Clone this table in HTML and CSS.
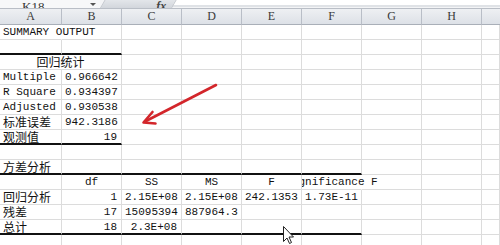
FILE: index.html
```html
<!DOCTYPE html>
<html>
<head>
<meta charset="utf-8">
<link rel="stylesheet" href="styles.css">
</head>
<body>
<div class="sheet">
  <div class="fbar">
    <div class="namebox"><span class="nametext">K18</span><span class="dd"></span></div>
    <div class="fbtns"><span class="fx">fx</span></div>
    <div class="finput"></div>
  </div>
  <div class="grid">
    <div class="h">A</div><div class="h">B</div><div class="h">C</div><div class="h">D</div><div class="h">E</div><div class="h">F</div><div class="h">G</div><div class="h">H</div><div class="h last"></div>

    <div class="c spill">SUMMARY OUTPUT</div><div class="c"></div><div class="c"></div><div class="c"></div><div class="c"></div><div class="c"></div><div class="c"></div><div class="c"></div><div class="c"></div>

    <div class="c tb"></div><div class="c tb"></div><div class="c"></div><div class="c"></div><div class="c"></div><div class="c"></div><div class="c"></div><div class="c"></div><div class="c"></div>

    <div class="c ctr span2"><span class="cjk">回归统计</span></div><div class="c"></div><div class="c"></div><div class="c"></div><div class="c"></div><div class="c"></div><div class="c"></div><div class="c"></div>

    <div class="c">Multiple</div><div class="c r">0.966642</div><div class="c"></div><div class="c"></div><div class="c"></div><div class="c"></div><div class="c"></div><div class="c"></div><div class="c"></div>

    <div class="c">R Square</div><div class="c r">0.934397</div><div class="c"></div><div class="c"></div><div class="c"></div><div class="c"></div><div class="c"></div><div class="c"></div><div class="c"></div>

    <div class="c">Adjusted</div><div class="c r">0.930538</div><div class="c"></div><div class="c"></div><div class="c"></div><div class="c"></div><div class="c"></div><div class="c"></div><div class="c"></div>

    <div class="c"><span class="cjk">标准误差</span></div><div class="c r">942.3186</div><div class="c"></div><div class="c"></div><div class="c"></div><div class="c"></div><div class="c"></div><div class="c"></div><div class="c"></div>

    <div class="c tb"><span class="cjk">观测值</span></div><div class="c r tb">19</div><div class="c"></div><div class="c"></div><div class="c"></div><div class="c"></div><div class="c"></div><div class="c"></div><div class="c"></div>

    <div class="c"></div><div class="c"></div><div class="c"></div><div class="c"></div><div class="c"></div><div class="c"></div><div class="c"></div><div class="c"></div><div class="c"></div>

    <div class="c tb"><span class="cjk">方差分析</span></div><div class="c tb"></div><div class="c tb"></div><div class="c tb"></div><div class="c tb"></div><div class="c tb"></div><div class="c"></div><div class="c"></div><div class="c"></div>

    <div class="c"></div><div class="c ctr">df</div><div class="c ctr">SS</div><div class="c ctr">MS</div><div class="c ctr">F</div><div class="c sig">Significance F</div><div class="c"></div><div class="c"></div><div class="c"></div>

    <div class="c"><span class="cjk">回归分析</span></div><div class="c r">1</div><div class="c r">2.15E+08</div><div class="c r">2.15E+08</div><div class="c r">242.1353</div><div class="c r">1.73E-11</div><div class="c"></div><div class="c"></div><div class="c"></div>

    <div class="c"><span class="cjk">残差</span></div><div class="c r">17</div><div class="c r">15095394</div><div class="c r">887964.3</div><div class="c"></div><div class="c"></div><div class="c"></div><div class="c"></div><div class="c"></div>

    <div class="c tb"><span class="cjk">总计</span></div><div class="c r tb">18</div><div class="c r tb">2.3E+08</div><div class="c tb"></div><div class="c tb"></div><div class="c tb"></div><div class="c"></div><div class="c"></div><div class="c"></div>

    <div class="c"></div><div class="c"></div><div class="c"></div><div class="c"></div><div class="c"></div><div class="c"></div><div class="c"></div><div class="c"></div><div class="c"></div>
  </div>

  <svg class="overlay" width="500" height="245" viewBox="0 0 500 245">
    <g class="arrow">
      <path d="M216 85 L145 121.5"/>
      <path d="M152.5 112 L143.5 122.5 L155.5 123.5"/>
    </g>
    <path class="cursor" d="M283.5 226.5 L283.5 241.5 L287 238 L289.5 243.5 L291.5 242.5 L289 237 L293.5 237 Z"/>
  </svg>
</div>
</body>
</html>
```

FILE: styles.css
```css
html, body {
  margin: 0;
  padding: 0;
  background: #ffffff;
}

.sheet {
  position: relative;
  width: 500px;
  height: 245px;
  overflow: hidden;
  background: #ffffff;
}

.fbar {
  display: flex;
  height: 9px;
  overflow: hidden;
  background: #f3f4f6;
  border-bottom: 1px solid #b9bec6;
  box-sizing: border-box;
}

.namebox {
  width: 100px;
  display: flex;
  align-items: flex-end;
  background: #f7f8f9;
  position: relative;
}

.nametext {
  display: block;
  margin-left: 22px;
  margin-bottom: -5px;
  font: 13px "Liberation Serif", serif;
  color: #333;
  line-height: 13px;
}

.dd {
  position: absolute;
  right: 4px;
  bottom: 2px;
  width: 0;
  height: 0;
  border-left: 3px solid transparent;
  border-right: 3px solid transparent;
  border-top: 3px solid #555;
}

.fbtns {
  width: 70px;
  background: linear-gradient(#e3e6ea, #d2d6dc);
  border-left: 1px solid #c2c6cc;
  border-right: 1px solid #c2c6cc;
  display: flex;
  justify-content: flex-end;
  align-items: flex-end;
  transform: skewX(-30deg);
  transform-origin: bottom;
}

.fx {
  display: block;
  transform: skewX(30deg);
  margin-right: 6px;
  margin-bottom: -4px;
  font: italic bold 12px "Liberation Serif", serif;
  color: #444;
  line-height: 12px;
}

.finput {
  flex: 1;
  background: #ffffff;
  border-bottom: 2px solid #dfe2e6;
  box-sizing: border-box;
  margin-bottom: 1px;
}

.grid {
  display: grid;
  grid-template-columns: 62px repeat(7, 60px) 1fr;
  grid-template-rows: 16px repeat(15, 15px);
}

.h {
  box-sizing: border-box;
  background: linear-gradient(#eef0f3, #dde1e7);
  border-right: 1px solid #b9bec7;
  border-bottom: 1px solid #a9afb8;
  font: 12px "Liberation Serif", serif;
  color: #3a3a3a;
  text-align: center;
  line-height: 15px;
}

.h.last {
  border-right: none;
}

.c {
  box-sizing: border-box;
  border-right: 1px solid #dcdcdc;
  border-bottom: 1px solid #dcdcdc;
  padding: 0 3px 0 3px;
  white-space: nowrap;
  overflow: hidden;
  font: 11px "Liberation Mono", "Noto Sans CJK SC", monospace;
  color: #111;
  line-height: 14px;
}

.c.spill {
  overflow: visible;
  border-right-color: transparent;
}

.c.r {
  text-align: right;
  padding-right: 4px;
}

.c.ctr {
  text-align: center;
}

.c.span2 {
  grid-column: span 2;
}

.c.tb {
  border-bottom: 2px solid #111;
}

.cjk {
  display: inline-block;
  vertical-align: top;
  height: 14px;
  font-family: "Noto Sans CJK SC", sans-serif;
  font-size: 12px;
  line-height: 14px;
}

.c.sig {
  overflow: visible;
  display: flex;
  justify-content: center;
  clip-path: inset(0 -120px 0 0);
  border-right-color: transparent;
}

.overlay {
  position: absolute;
  left: 0;
  top: 0;
  pointer-events: none;
}

.arrow path {
  fill: none;
  stroke: #d3262b;
  stroke-width: 2.6;
  stroke-linecap: round;
  stroke-linejoin: round;
}

.cursor {
  fill: #ffffff;
  stroke: #222;
  stroke-width: 1;
  stroke-linejoin: miter;
}
```
